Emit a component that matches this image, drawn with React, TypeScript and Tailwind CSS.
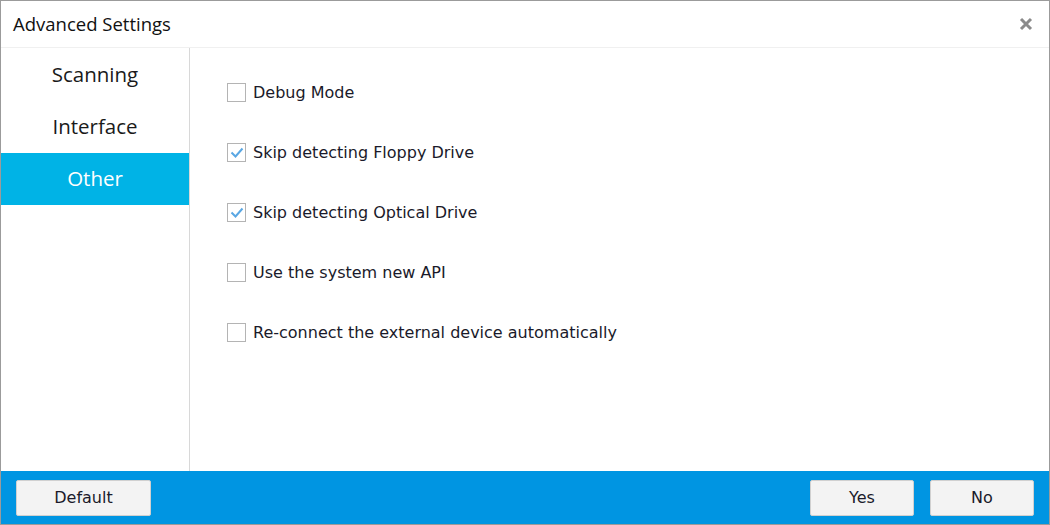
import { useState } from 'react'

const tabs = ['Scanning', 'Interface', 'Other']

const options = [
  { label: 'Debug Mode', checked: false },
  { label: 'Skip detecting Floppy Drive', checked: true },
  { label: 'Skip detecting Optical Drive', checked: true },
  { label: 'Use the system new API', checked: false },
  { label: 'Re-connect the external device automatically', checked: false },
]

function CheckBox({ checked }: { checked: boolean }) {
  return (
    <span className="w-[19px] h-[19px] border border-[#b4b4b4] bg-white flex items-center justify-center shrink-0">
      {checked && (
        <svg width="14" height="11" viewBox="0 0 14 11" fill="none">
          <path d="M1.5 5.5l4 4L12.5 1.5" stroke="#5aa7e3" strokeWidth="2" />
        </svg>
      )}
    </span>
  )
}

export default function App() {
  const [items, setItems] = useState(options)

  return (
    <div
      className="w-[1050px] h-[525px] flex flex-col bg-white border border-[#9b9b9b] text-[#222]"
      style={{ fontFamily: '"DejaVu Sans", Verdana, sans-serif' }}
    >
      {/* Title bar */}
      <div className="h-[47px] shrink-0 flex items-center justify-between pl-3 pr-4 border-b border-[#f0f0f0]">
        <span className="text-[18.5px] text-[#111]" style={{ fontFamily: '"Open Sans", sans-serif' }}>
          Advanced Settings
        </span>
        <svg width="14" height="14" viewBox="0 0 14 14">
          <path d="M2 2l10 10M12 2L2 12" stroke="#8a8a8a" strokeWidth="3" />
        </svg>
      </div>

      <div className="flex flex-1 min-h-0">
        {/* Sidebar */}
        <div className="w-[189px] shrink-0 border-r border-[#d8d8d8] pt-[1px]">
          {tabs.map((t) => (
            <div
              key={t}
              className={`h-[52px] flex items-center justify-center text-[20.5px] pb-[1px] ${
                t === 'Other' ? 'bg-[#00b3e6] text-white' : 'text-[#1a1a1a]'
              }`}
              style={{ fontFamily: '"Open Sans", sans-serif' }}
            >
              {t}
            </div>
          ))}
        </div>

        {/* Options */}
        <div className="flex-1 flex flex-col gap-[41px] pl-[37px] pt-[35px]">
          {items.map((o, i) => (
            <label
              key={o.label}
              className="flex items-center gap-[7px] h-[19px] text-[16px] text-[#1a1a2a] cursor-pointer"
              onClick={() =>
                setItems(items.map((x, j) => (j === i ? { ...x, checked: !x.checked } : x)))
              }
            >
              <CheckBox checked={o.checked} />
              {o.label}
            </label>
          ))}
        </div>
      </div>

      {/* Footer */}
      <div className="h-[53px] shrink-0 bg-[#0095e2] flex items-center justify-between pl-[15px] pr-[15px]">
        <button className="w-[135px] h-[36px] bg-[#f3f3f3] border border-[#d0d0d0] rounded-[2px] text-[16px] text-[#1a1a2a]">
          Default
        </button>
        <div className="flex gap-4">
          <button className="w-[104px] h-[36px] bg-[#f3f3f3] border border-[#d0d0d0] rounded-[2px] text-[16px] text-[#1a1a2a]">
            Yes
          </button>
          <button className="w-[104px] h-[36px] bg-[#f3f3f3] border border-[#d0d0d0] rounded-[2px] text-[16px] text-[#1a1a2a]">
            No
          </button>
        </div>
      </div>
    </div>
  )
}
